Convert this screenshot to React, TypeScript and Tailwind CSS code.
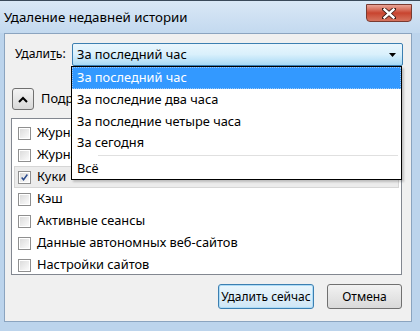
import React from 'react';

const font = { fontFamily: '"Noto Sans", "Open Sans", sans-serif' };

interface Item {
    label: string;
    checked: boolean;
    focused?: boolean;
}

const items: Item[] = [
    { label: 'Журнал посещений и загрузок', checked: false },
    { label: 'Журнал форм и поиска', checked: false },
    { label: 'Куки', checked: true, focused: true },
    { label: 'Кэш', checked: false },
    { label: 'Активные сеансы', checked: false },
    { label: 'Данные автономных веб-сайтов', checked: false },
    { label: 'Настройки сайтов', checked: false },
];

const Checkbox: React.FC<{ checked: boolean }> = ({ checked }) => (
    <div className="w-[13px] h-[13px] border border-[#8f8f8f] bg-white p-[1px] shrink-0">
        <div className="w-full h-full bg-gradient-to-br from-[#dcdcdc] to-[#fbfbfb] flex items-center justify-center">
            {checked && (
                <svg width="11" height="11" viewBox="0 0 11 11">
                    <path d="M2 5.5 L4.3 8.2 L9 1.8" fill="none" stroke="#2a4a8c" strokeWidth="1.8" />
                </svg>
            )}
        </div>
    </div>
);

export default function App() {
    return (
        <div className="w-[420px] h-[331px] bg-[#bcd4ec] border-t border-[#3a4a5a] flex flex-col text-[12.8px] text-black overflow-hidden" style={font}>
            {/* заголовок */}
            <div className="h-[32px] shrink-0 flex items-start justify-between bg-gradient-to-b from-[#d9e8f6] to-[#c3d9ef]">
                <span className="pl-[4px] pt-[7px] text-[13.3px] leading-[18px]">Удаление недавней истории</span>
                <div className="mt-[3px] mr-[8px] w-[46px] h-[18px] rounded-b-[4px] border border-[#7a3a30] bg-gradient-to-b from-[#e8a497] via-[#c8442f] to-[#d5735e] flex items-center justify-center">
                    <svg width="14" height="11" viewBox="0 0 14 11">
                        <path d="M2 1 L12 10 M12 1 L2 10" stroke="#3a1a14" strokeWidth="4" strokeLinecap="square" />
                        <path d="M2.5 1.5 L11.5 9.5 M11.5 1.5 L2.5 9.5" stroke="white" strokeWidth="2.4" strokeLinecap="square" />
                    </svg>
                </div>
            </div>

            {/* клиентская область */}
            <div className="mx-[4px] mr-[8px] flex-1 mb-[9px] border border-[#8ba4bf] bg-[#f0f0f0] flex flex-col relative">
                <div className="flex items-center mt-[9px] h-[23px]">
                    <span className="ml-[10px] w-[56px] text-[12.2px]">Удали<span className="underline">т</span>ь:</span>
                    <div className="ml-[1px] w-[331px] h-[23px] rounded-[2px] border border-[#3c7fb1] bg-gradient-to-b from-[#eaf6fd] via-[#d9f0fc] to-[#a7d9f5] flex items-center justify-between pl-[4px] pr-[6px]">
                        <span>За последний час</span>
                        <svg width="7" height="4" viewBox="0 0 7 4">
                            <path d="M0 0 L7 0 L3.5 4 Z" fill="black" />
                        </svg>
                    </div>
                </div>

                <div className="flex items-center mt-[22px] h-[22px]">
                    <div className="ml-[7px] w-[22px] h-[22px] rounded-[3px] border border-[#707070] bg-gradient-to-b from-[#f4f4f4] to-[#d8d8d8] flex items-center justify-center">
                        <svg width="10" height="7" viewBox="0 0 10 7">
                            <path d="M1 6 L5 2 L9 6" fill="none" stroke="black" strokeWidth="2" />
                        </svg>
                    </div>
                    <span className="ml-[7px]">Подробности</span>
                </div>

                <div className="mt-[8px] ml-[6px] w-[391px] h-[157px] border border-[#828790] bg-white pt-[3px] px-[2px]">
                    {items.map(item => (
                        <div
                            key={item.label}
                            className={`h-[22px] flex items-center pl-[3px] border ${item.focused ? 'bg-[#ececec] border-[#d6d6d6]' : 'border-transparent'}`}
                        >
                            <Checkbox checked={item.checked} />
                            <span className="ml-[6px]">{item.label}</span>
                        </div>
                    ))}
                </div>

                <div className="flex justify-end gap-[13px] mt-[9px] mr-[9px] text-[12px]">
                    <button className="w-[96px] h-[25px] whitespace-nowrap rounded-[3px] border border-[#3c7fb1] bg-gradient-to-b from-[#eaf6fd] to-[#cfe6f5] shadow-[inset_0_0_0_1px_#aedcf7]">Удалить сейчас</button>
                    <button className="w-[75px] h-[25px] whitespace-nowrap rounded-[3px] border border-[#707070] bg-gradient-to-b from-[#f2f2f2] to-[#d9d9d9]">Отмена</button>
                </div>

                {/* выпадающий список */}
                <div className="absolute left-[66px] top-[32px] w-[331px] border border-black bg-white shadow-[2px_2px_2px_rgba(0,0,0,0.2)]">
                    <div className="h-[22px] flex items-center pl-[4px] bg-[#3399ff] text-white border border-dotted border-[#9cc8f5]">За последний час</div>
                    <div className="h-[22px] flex items-center pl-[5px]">За последние два часа</div>
                    <div className="h-[21px] flex items-center pl-[5px]">За последние четыре часа</div>
                    <div className="h-[21px] flex items-center pl-[5px]">За сегодня</div>
                    <div className="h-[5px] flex items-center pl-[26px] pr-[3px]">
                        <div className="h-px w-full bg-[#e0e0e0]" />
                    </div>
                    <div className="h-[21px] flex items-center pl-[5px]">Всё</div>
                </div>
            </div>
        </div>
    );
}
